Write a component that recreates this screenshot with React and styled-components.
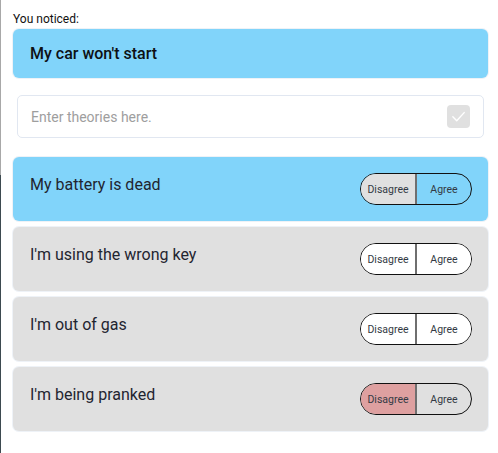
import styled, { createGlobalStyle } from 'styled-components';

const GlobalStyle = createGlobalStyle`
  html, body {
    margin: 0;
    padding: 0;
    background: #ffffff;
  }
  body {
    font-family: Roboto, 'Liberation Sans', sans-serif;
    color: #1f2530;
    border-left: 1px solid transparent;
    border-image: linear-gradient(to bottom, #a8a8a8 0, #a8a8a8 175px, #3d4a50 175px, #3d4a50 100%) 1;
    min-height: 453px;
    box-sizing: border-box;
  }
`;

const theories = [
  { text: 'My battery is dead', vote: 'agree' },
  { text: "I'm using the wrong key", vote: null },
  { text: "I'm out of gas", vote: null },
  { text: "I'm being pranked", vote: 'disagree' },
];

const Page = styled.div`
  padding: 12px 10px 0 12px;
  display: flex;
  flex-direction: column;
`;

const Label = styled.div`
  font-size: 12px;
  line-height: 14px;
  color: #111;
  margin-bottom: 3px;
`;

const Card = styled.div`
  background: ${(p) => (p.$active ? '#81d4fa' : '#e0e0e0')};
  border-radius: 6px;
  box-shadow: 0 0 0 1px #eef2f7;
`;

const NoticedCard = styled(Card)`
  height: 49px;
  display: flex;
  align-items: center;
  padding: 0 17px;
  font-size: 16px;
  font-weight: 500;
  color: #0d1014;
  margin-bottom: 17px;
`;

const InputBox = styled.div`
  margin: 0 4px 19px;
  height: 41px;
  border: 1px solid #e1e7f1;
  border-radius: 5px;
  display: flex;
  align-items: center;
  padding: 0 13px 0 13px;
`;

const TheoryInput = styled.input`
  flex: 1;
  border: none;
  outline: none;
  background: transparent;
  font-family: Roboto, 'Liberation Sans', sans-serif;
  font-size: 14px;
  color: #333;
  padding: 0;
  &::placeholder {
    color: #9e9e9e;
  }
`;

const CheckButton = styled.div`
  width: 23px;
  height: 23px;
  border-radius: 4px;
  background: #e0e0e0;
  display: flex;
  align-items: center;
  justify-content: center;
`;

const List = styled.div`
  display: flex;
  flex-direction: column;
  gap: 6px;
`;

const TheoryCard = styled(Card)`
  height: 64px;
  box-sizing: border-box;
  display: flex;
  justify-content: space-between;
  align-items: flex-start;
  padding: 16px 16px 0 17px;
`;

const TheoryText = styled.div`
  font-size: 16px;
  line-height: 24px;
  color: #1f2530;
`;

const Toggle = styled.div`
  display: flex;
  width: 112px;
  height: 32px;
  box-sizing: border-box;
  border: 1px solid #111;
  border-radius: 16px;
  overflow: hidden;
`;

const ToggleHalf = styled.div`
  flex: 1;
  display: flex;
  align-items: center;
  justify-content: center;
  font-size: 10.5px;
  color: #333a44;
  background: ${(p) => p.$bg};
  & + & {
    border-left: 2px solid #6f6f6f;
  }
`;

function voteColors(vote) {
  if (vote === 'agree') return ['#e0e0e0', 'transparent'];
  if (vote === 'disagree') return ['#dea0a0', 'transparent'];
  return ['#ffffff', '#ffffff'];
}

export default function App() {
  return (
    <>
      <GlobalStyle />
      <Page>
        <Label>You noticed:</Label>
        <NoticedCard $active>My car won't start</NoticedCard>
        <InputBox>
          <TheoryInput placeholder="Enter theories here." />
          <CheckButton>
            <svg width="17" height="17" viewBox="0 0 24 24" fill="none" stroke="#ffffff" strokeWidth="2" strokeLinecap="round" strokeLinejoin="round">
              <polyline points="4 12.5 9.5 18 20 6.5" />
            </svg>
          </CheckButton>
        </InputBox>
        <List>
          {theories.map((t) => {
            const [dis, agr] = voteColors(t.vote);
            return (
              <TheoryCard key={t.text} $active={t.vote === 'agree'}>
                <TheoryText>{t.text}</TheoryText>
                <Toggle>
                  <ToggleHalf $bg={dis}>Disagree</ToggleHalf>
                  <ToggleHalf $bg={agr}>Agree</ToggleHalf>
                </Toggle>
              </TheoryCard>
            );
          })}
        </List>
      </Page>
    </>
  );
}
